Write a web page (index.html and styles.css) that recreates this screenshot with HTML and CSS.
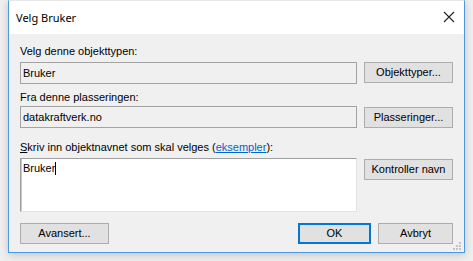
FILE: index.html
```html
<!DOCTYPE html>
<html>
<head>
<meta charset="utf-8">
<link rel="stylesheet" href="styles.css">
</head>
<body>
<div class="window">
  <div class="titlebar">
    <span class="title">Velg Bruker</span>
    <svg class="close" width="12" height="12" viewBox="0 0 12 12"><path d="M1 1 L11 11 M11 1 L1 11" stroke="#222" stroke-width="1.1" fill="none"/></svg>
  </div>
  <div class="content">
    <div class="label l1">Velg denne objekttypen:</div>
    <div class="row r1">
      <div class="field">Bruker</div>
      <div class="btn">Objekttyper...</div>
    </div>
    <div class="label l2">Fra denne plasseringen:</div>
    <div class="row r2">
      <div class="field">datakraftverk.no</div>
      <div class="btn b2">Plasseringer...</div>
    </div>
    <div class="label l3"><u>S</u>kriv inn objektnavnet som skal velges (<a class="link">eksempler</a>):</div>
    <div class="row r3">
      <div class="textarea">Bruker<span class="caret"></span></div>
      <div class="btn b3">Kontroller navn</div>
    </div>
    <div class="footer">
      <div class="btn adv">Avansert...</div>
      <div class="spacer"></div>
      <div class="btn ok">OK</div>
      <div class="btn cancel">Avbryt</div>
    </div>
  </div>
  <div class="grip">
    <svg width="8" height="8" viewBox="0 0 8 8">
      <rect x="6" y="0" width="2" height="2" fill="#c4c4c4"/>
      <rect x="3" y="3" width="2" height="2" fill="#c4c4c4"/>
      <rect x="6" y="3" width="2" height="2" fill="#c4c4c4"/>
      <rect x="0" y="6" width="2" height="2" fill="#c4c4c4"/>
      <rect x="3" y="6" width="2" height="2" fill="#c4c4c4"/>
      <rect x="6" y="6" width="2" height="2" fill="#c4c4c4"/>
    </svg>
  </div>
</div>
</body>
</html>
```
FILE: styles.css
```css
html, body {
  margin: 0;
  padding: 0;
}
body {
  background: #efefef;
  width: 473px;
  height: 261px;
  overflow: hidden;
  font-family: "Liberation Sans", Arial, sans-serif;
  font-size: 11px;
  color: #000;
}
.window {
  position: relative;
  margin-left: 8px;
  width: 455px;
  height: 251px;
  border: 1px solid #4c9be2;
  border-top-color: #e6e6e6;
  background: #f0f0f0;
  box-shadow: 0 2px 8px rgba(0,0,0,0.18);
}
.titlebar {
  height: 33px;
  background: #fff;
  display: flex;
  align-items: center;
  justify-content: space-between;
  padding: 0 9px 0 7px;
}
.title {
  font-family: "Noto Sans", "Open Sans", sans-serif;
  font-size: 11px;
  color: #000;
  margin-top: -1px;
}
.close {
  display: block;
  margin-top: -1px;
}
.content {
  padding: 10px 11px 0 11px;
}
.label {
  height: 14px;
  line-height: 14px;
  white-space: nowrap;
}
.l1 { margin-bottom: 4px; }
.l2 { margin-top: 6px; margin-bottom: 2px; }
.l3 { margin-top: 12px; margin-bottom: 4px; }
.row {
  display: flex;
  gap: 7px;
  align-items: flex-start;
}
.field {
  flex: 1;
  height: 20px;
  line-height: 20px;
  border: 1px solid #a3a3a3;
  background: #f0f0f0;
  padding-left: 2px;
}
.btn {
  box-sizing: border-box;
  width: 89px;
  height: 21px;
  line-height: 19px;
  text-align: center;
  background: #e1e1e1;
  border: 1px solid #adadad;
  color: #000;
}
.b2 { margin-top: 1px; }
.b3 { margin-top: 1px; }
.textarea {
  flex: 1;
  height: 52px;
  background: #fff;
  border-style: solid;
  border-width: 1px;
  border-color: #a0a0a0 #e3e3e3 #e3e3e3 #a0a0a0;
  box-shadow: inset 1px 0 0 #c8c8c8;
  box-sizing: content-box;
  padding: 0 0 0 2px;
  line-height: 18px;
}
.caret {
  display: inline-block;
  width: 1px;
  height: 13px;
  background: #000;
  vertical-align: -3px;
}
.link {
  color: #0066cc;
  text-decoration: underline;
}
.footer {
  display: flex;
  gap: 7px;
  margin-top: 11px;
}
.spacer { flex: 1; }
.adv { width: 89px; }
.ok {
  width: 73px;
  border: 1px solid #0078d7;
  box-shadow: inset 0 0 0 1px #0078d7;
}
.cancel { width: 75px; }
.grip {
  position: absolute;
  right: 3px;
  bottom: 2px;
  line-height: 0;
}
```
